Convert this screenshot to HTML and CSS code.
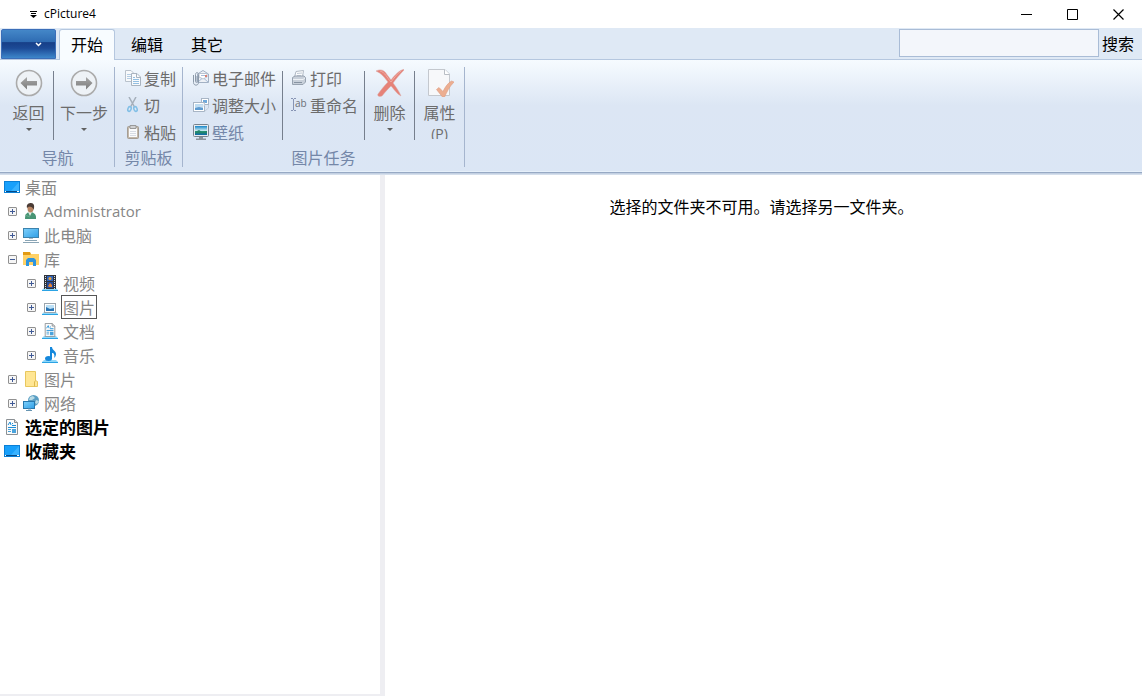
FILE: index.html
```
<!DOCTYPE html>
<html lang="zh-CN">

<head>
    <meta charset="utf-8">
    <title>cPicture4</title>
    <link rel="stylesheet" href="styles.css">
</head>

<body>
    <!-- shared icons -->
    <svg class="defs">
        <linearGradient id="screen" x1="0" y1="0" x2="1" y2="1">
            <stop offset="0" stop-color="#7fd0fb" />
            <stop offset="1" stop-color="#2f9fe6" />
        </linearGradient>
        <linearGradient id="metal" x1="0" y1="0" x2="0" y2="1">
            <stop offset="0" stop-color="#a8a8a8" />
            <stop offset="1" stop-color="#7c7c7c" />
        </linearGradient>
        <linearGradient id="sky" x1="0" y1="0" x2="0" y2="1">
            <stop offset="0" stop-color="#1685c9" />
            <stop offset="0.55" stop-color="#d6f1f4" />
            <stop offset="0.6" stop-color="#2a9a7a" />
            <stop offset="1" stop-color="#0a6a86" />
        </linearGradient>
        <symbol id="desktop" viewBox="0 0 16 16">
            <rect x="0" y="2" width="16" height="12" fill="#0a7fd6" />
            <rect x="1" y="3" width="14" height="9" fill="#18a0fb" />
            <path d="M7 12L15 3V12Z" fill="#38b2ff" />
            <path d="M1 12.5H15" stroke="#064a86" />
            <path d="M1 12.5H2M13 12.5H15" stroke="#fff" />
        </symbol>
        <symbol id="document" viewBox="0 0 16 16">
            <path d="M2.5 .5H10.500L13.500 3.500V15.500H2.500Z" fill="#fafafa" stroke="#8b9094" />
            <path d="M10.500 .5V3.500H13.500" fill="#ddd" stroke="#8b9094" />
            <path d="M4 6L6 3L7 6M8 4.500H9M8 6.500H12M4 8.500H12" fill="none" stroke="#1e8fd8" />
            <path d="M4 10.500H7M4 12.500H7" stroke="#45a0d8" />
            <rect x="8" y="10" width="4" height="4" fill="#4aa3dc" />
        </symbol>
        <symbol id="stand" viewBox="0 0 16 16">
            <path d="M2 13H14L16 15H0Z" fill="#8fd8fa" />
            <path d="M0 15.500H16" stroke="#2ba3e4" />
        </symbol>
    </svg>

    <header class="titlebar">
        <button class="quick" aria-label="自定义快速访问工具栏">
            <svg width="7" height="7" viewBox="0 0 7 7"><path d="M0 .5H7M1 2.500H6" stroke="#000" /><path d="M0 4H7L3.500 7Z" /></svg>
        </button>
        <h1>cPicture4</h1>
        <div class="window-buttons">
            <button aria-label="最小化"><svg width="11" height="11"><path d="M0 5.500H11" stroke="#000" /></svg></button>
            <button aria-label="最大化"><svg width="11" height="11"><path d="M.5 .5H10.500V10.500H.5Z" fill="none" stroke="#000" /></svg></button>
            <button aria-label="关闭"><svg width="11" height="11"><path d="M.5 .5L10.500 10.500M10.500 .5L.5 10.500" stroke="#000" stroke-width="1.200" /></svg></button>
        </div>
    </header>

    <nav class="tabs">
        <button class="app-menu" aria-label="菜单">
            <svg width="7" height="5"><path d="M1 1L3.500 3.500L6 1" fill="none" stroke="#fff" stroke-width="1.500" /></svg>
        </button>
        <button class="tab active">开始</button>
        <button class="tab">编辑</button>
        <button class="tab">其它</button>
        <form class="search">
            <input type="text" id="search">
            <label for="search">搜索</label>
        </form>
    </nav>

    <div class="ribbon">
        <section class="group">
            <div class="tools nav-tools">
                <button class="large">
                    <svg width="28" height="28" viewBox="0 0 28 28">
                        <circle cx="14" cy="14" r="12.500" fill="#eef2f6" stroke="#ababab" stroke-width="1.600" />
                        <path d="M5.500 14L12 8V12H22V16.500H12V20.500Z" fill="url(#metal)" />
                    </svg>
                    <span>返回</span>
                    <i class="arrow"></i>
                </button>
                <div class="divider"></div>
                <button class="large">
                    <svg width="28" height="28" viewBox="0 0 28 28">
                        <circle cx="14" cy="14" r="12.500" fill="#eef2f6" stroke="#ababab" stroke-width="1.600" />
                        <path d="M22.500 14L16 8V12H6V16.500H16V20.500Z" fill="url(#metal)" />
                    </svg>
                    <span>下一步</span>
                    <i class="arrow"></i>
                </button>
            </div>
            <h2>导航</h2>
        </section>

        <section class="group">
            <div class="tools">
                <div class="column">
                    <button class="small">
                        <svg width="16" height="16" viewBox="0 0 16 16">
                            <path d="M.5 .5H6L8.500 3V11.500H.5Z" fill="#f8fafc" stroke="#b9c2cc" />
                            <path d="M2 4.500H6M2 6.500H6M2 8.500H6" stroke="#b3cde4" />
                            <path d="M6.500 3.500H12L15.500 7V15.500H6.500Z" fill="#f8fafc" stroke="#a9b4c0" />
                            <path d="M11.500 3.500V7.500H15.500" fill="none" stroke="#a9b4c0" />
                            <path d="M8 9.500H14M8 11.500H14M8 13.500H14M8 7.500H10" stroke="#93bfe2" />
                        </svg>
                        复制
                    </button>
                    <button class="small">
                        <svg width="16" height="16" viewBox="0 0 16 16">
                            <path d="M4 0L9.500 10M11 0L5.500 10" stroke="#a5afba" stroke-width="1.500" />
                            <ellipse cx="4.500" cy="12" rx="1.600" ry="2.400" fill="none" stroke="#82bfe6" stroke-width="1.500" transform="rotate(20 4.500 12)" />
                            <ellipse cx="10.500" cy="12" rx="1.600" ry="2.400" fill="none" stroke="#82bfe6" stroke-width="1.500" transform="rotate(-20 10.500 12)" />
                        </svg>
                        切
                    </button>
                    <button class="small">
                        <svg width="16" height="16" viewBox="0 0 16 16">
                            <rect x="2.500" y="2.500" width="11" height="12" rx="1" fill="#c3b8aa" stroke="#a59d94" />
                            <path d="M4 4H12V13H4Z" fill="#fafbfd" />
                            <path d="M5 1.500H11V4.500H5Z" fill="#d0d1d3" stroke="#999" />
                            <path d="M5 7.500H11M5 9.500H11M5 11.500H11" stroke="#d7dce4" />
                        </svg>
                        粘贴
                    </button>
                </div>
            </div>
            <h2>剪贴板</h2>
        </section>

        <section class="group">
            <div class="tools">
                <div class="column">
                    <button class="small">
                        <svg width="16" height="16" viewBox="0 0 16 16">
                            <path d="M4.500 4L10 .5L15.500 4V12.500H4.500Z" fill="#eef1f6" stroke="#a3b1c4" />
                            <path d="M6 3.500H14V7L10 9L6 7Z" fill="#fff" stroke="#b9c3d1" />
                            <path d="M5 12L9 8.500M15 12L11 8.500M8 5.500H12" stroke="#a7bcd8" />
                            <rect x="12" y="5" width="2" height="2" fill="#dc8074" />
                            <path d="M.5 5V12.500C.5 16 5.500 16 5.500 12.500V4.500C5.500 2 2.500 2 2.500 4.500V11C2.500 13 4 13 4 11V6" fill="none" stroke="#8c9aaa" />
                        </svg>
                        电子邮件
                    </button>
                    <button class="small">
                        <svg width="16" height="16" viewBox="0 0 16 16">
                            <rect x="8.500" y="1.500" width="7" height="6" fill="#fff" stroke="#a8b5c5" />
                            <rect x="10" y="3" width="4" height="3" fill="#6fa9dc" />
                            <rect x=".5" y="5.500" width="11" height="9" fill="#fff" stroke="#a8b5c5" />
                            <rect x="2" y="7" width="8" height="6" fill="#bfdcf1" />
                            <path d="M2 13V11L6 10L10 11V13Z" fill="#5e9bd0" />
                            <path d="M7 9H11V6" fill="none" stroke="#d8e2ec" />
                            <path d="M11.500 14.500L15.500 11V8" fill="none" stroke="#c1ccd9" />
                        </svg>
                        调整大小
                    </button>
                    <button class="small blue">
                        <svg width="16" height="16" viewBox="0 0 16 16">
                            <rect x=".5" y=".5" width="15" height="12" rx="1" fill="#e8ebef" stroke="#77828e" />
                            <rect x="2" y="2" width="12" height="9" fill="url(#sky)" />
                            <path d="M2 8L6 6L9 8L14 7V11H2Z" fill="#23866c" />
                            <path d="M2 9.500H14V11H2Z" fill="#136fa5" />
                            <path d="M6 13H10V14.500H13V16H3V14.500H6Z" fill="#8b949c" />
                        </svg>
                        壁纸
                    </button>
                </div>
                <div class="divider"></div>
                <div class="column">
                    <button class="small">
                        <svg width="16" height="16" viewBox="0 0 16 16">
                            <path d="M5 1.500L12.500 .5L11.500 7H3.500Z" fill="#fbfcfd" stroke="#b0b9c4" />
                            <path d="M6 3.500L11 3M6 5.500H10" stroke="#bfcad6" />
                            <path d="M1.500 7.500L4 6H13L14.500 7.500V12L12 14.500H1.500Z" fill="#c8d0da" stroke="#97a2b0" />
                            <path d="M2 9.500H12L14 8" fill="none" stroke="#eef2f6" />
                            <path d="M3 12.500H11" stroke="#8793a2" />
                        </svg>
                        打印
                    </button>
                    <button class="small">
                        <svg width="16" height="16" viewBox="0 0 16 16">
                            <path d="M0 1.500H2M3 1.500H5M2.500 2V13M0 13.500H2M3 13.500H5" stroke="#8794b4" />
                            <text x="4" y="10" class="icon-text">ab</text>
                        </svg>
                        重命名
                    </button>
                </div>
                <div class="divider"></div>
                <button class="large">
                    <svg width="28" height="28" viewBox="0 0 28 28">
                        <path d="M0 2C4 0 7 1 9 3L15 11C19 6 23 1 29 0C24 5 20 10 17 14C20 18 23 22 25 27L22 25C19 22 17 19 15 17C12 20 9 23 6 27C3 28 1 27 2 25C5 21 8 17 12 13C9 9 5 4 0 2Z" fill="#e68278" stroke="#d8a6a2" stroke-width=".5" />
                        <path d="M4 2C9 3 11 9 15 13C18 9 21 5 25 2" fill="none" stroke="#efaaa2" />
                    </svg>
                    <span>删除</span>
                    <i class="arrow"></i>
                </button>
                <div class="divider"></div>
                <button class="large">
                    <svg width="28" height="28" viewBox="0 0 28 28">
                        <path d="M2.500 .5H19L23.500 5V26.500H2.500Z" fill="#f7f8fa" stroke="#c4c8ce" />
                        <path d="M18.500 .5V5.500H23.500" fill="#fff" stroke="#b9bec5" />
                        <path d="M10.500 20.500L13 18.500L17 22.500C19 18 22 14 25.500 12L28 13C23 18 21 23 18.500 28H16.500Z" fill="#ecae91" stroke="#dd9a80" stroke-width=".6" />
                    </svg>
                    <span>属性</span>
                    <span class="key">(P)</span>
                </button>
            </div>
            <h2>图片任务</h2>
        </section>
    </div>

    <main>
        <aside>
            <ul class="tree">
                <li>
                    <div class="row"><svg width="16" height="16"><use href="#desktop" /></svg><a href="#">桌面</a></div>
                    <ul>
                        <li>
                            <div class="row">
                                <button class="toggle plus" aria-label="展开"></button>
                                <svg width="16" height="16" viewBox="0 0 16 16">
                                    <path d="M2 16C2 11 4 9 7 9C10 9 13 11 13 14V16Z" fill="#489474" />
                                    <path d="M5 9L7 13L9 9Z" fill="#e6eee8" />
                                    <ellipse cx="7.500" cy="5.500" rx="3" ry="4" fill="#b98563" />
                                    <path d="M4 5C3 1 6 0 8 0C11 0 12 3 10.500 7C10 4 8 4 6 3.500Z" fill="#4a3b35" />
                                    <path d="M2 12L7 14" stroke="#69ad8e" />
                                </svg>
                                <a href="#" class="user">Administrator</a>
                            </div>
                        </li>
                        <li>
                            <div class="row">
                                <button class="toggle plus" aria-label="展开"></button>
                                <svg width="16" height="16" viewBox="0 0 16 16">
                                    <rect x=".5" y="1.500" width="15" height="9" fill="url(#screen)" stroke="#3c83ad" />
                                    <path d="M6 11H10V12H6Z" fill="#a9bcc8" />
                                    <path d="M2 13.500H14M0 15.500H16" stroke="#8aa5b5" />
                                </svg>
                                <a href="#">此电脑</a>
                            </div>
                        </li>
                        <li>
                            <div class="row">
                                <button class="toggle" aria-label="折叠"></button>
                                <svg width="16" height="16" viewBox="0 0 16 16">
                                    <path d="M0 1H7L8 3H16V14H0Z" fill="#e39b14" />
                                    <path d="M0 4H7L8 3H16V14H0Z" fill="#ffd166" />
                                    <path d="M3 15V9L5 7H11L13 9V15H10V11H6V15Z" fill="#2f94dd" />
                                </svg>
                                <a href="#">库</a>
                            </div>
                            <ul>
                                <li>
                                    <div class="row">
                                        <button class="toggle plus" aria-label="展开"></button>
                                        <svg width="16" height="16" viewBox="0 0 16 16">
                                            <use href="#stand" />
                                            <rect x="2" y="0" width="12" height="14" fill="#30343c" />
                                            <path d="M3.500 1V14M12.500 1V14" stroke="#d9dde0" stroke-dasharray="1 1" />
                                            <rect x="5" y="1" width="6" height="5" fill="#2e63bd" />
                                            <rect x="5" y="7" width="6" height="6" fill="#264c9b" />
                                            <circle cx="8" cy="3.500" r="1.500" fill="#e9a43a" />
                                            <path d="M6 11L8 8L10 10V12H7Z" fill="#e58334" />
                                        </svg>
                                        <a href="#">视频</a>
                                    </div>
                                </li>
                                <li>
                                    <div class="row">
                                        <button class="toggle plus" aria-label="展开"></button>
                                        <svg width="16" height="16" viewBox="0 0 16 16">
                                            <use href="#stand" />
                                            <rect x="2.500" y="4.500" width="11" height="9" fill="#fff" stroke="#9ba5ad" />
                                            <rect x="4" y="6" width="8" height="6" fill="#bce0f6" />
                                            <path d="M4 8L8 10L12 9V12H4Z" fill="#2875b5" />
                                        </svg>
                                        <a href="#" class="selected">图片</a>
                                    </div>
                                </li>
                                <li>
                                    <div class="row">
                                        <button class="toggle plus" aria-label="展开"></button>
                                        <svg width="16" height="16" viewBox="0 0 16 16">
                                            <use href="#stand" />
                                            <use href="#document" x="1" y="0" width="14" height="14" />
                                        </svg>
                                        <a href="#">文档</a>
                                    </div>
                                </li>
                                <li>
                                    <div class="row">
                                        <button class="toggle plus" aria-label="展开"></button>
                                        <svg width="16" height="16" viewBox="0 0 16 16">
                                            <use href="#stand" />
                                            <ellipse cx="6.500" cy="11.500" rx="3.500" ry="2.500" fill="#1588dc" />
                                            <path d="M8 0H10C10 3 14 4 14 7C14 9 13 10 12 11C13 8 12 6 10 6V12H8Z" fill="#1588dc" />
                                        </svg>
                                        <a href="#">音乐</a>
                                    </div>
                                </li>
                            </ul>
                        </li>
                        <li>
                            <div class="row">
                                <button class="toggle plus" aria-label="展开"></button>
                                <svg width="16" height="16" viewBox="0 0 16 16">
                                    <path d="M2.500 .5H12.500V9.500L14.500 10.500V15.500H2.500Z" fill="#ffe694" stroke="#e8c75e" />
                                    <path d="M12.500 9.500L11.500 11V15.500" fill="none" stroke="#dfba4e" />
                                </svg>
                                <a href="#">图片</a>
                            </div>
                        </li>
                        <li>
                            <div class="row">
                                <button class="toggle plus" aria-label="展开"></button>
                                <svg width="16" height="16" viewBox="0 0 16 16">
                                    <circle cx="10.500" cy="5.500" r="5.500" fill="#5b9fc4" />
                                    <path d="M7 2L10 1L12 3L9 5L6 5ZM13 5L16 6L14 9L12 8Z" fill="#b9dbe6" />
                                    <rect x=".5" y="6.500" width="11" height="7" fill="url(#screen)" stroke="#2878ad" />
                                    <path d="M5 14H8M3 15.500H9" stroke="#6795b2" />
                                </svg>
                                <a href="#">网络</a>
                            </div>
                        </li>
                    </ul>
                </li>
                <li>
                    <div class="row strong"><svg width="16" height="16"><use href="#document" /></svg><a href="#">选定的图片</a></div>
                </li>
                <li>
                    <div class="row strong"><svg width="16" height="16"><use href="#desktop" /></svg><a href="#">收藏夹</a></div>
                </li>
            </ul>
        </aside>
        <p class="message">选择的文件夹不可用。请选择另一文件夹。</p>
    </main>
</body>

</html>
```
FILE: styles.css
```
* {
    box-sizing: border-box;
}

body {
    display: flex;
    flex-direction: column;
    height: 100vh;
    margin: 0;
    overflow: hidden;
    background: #fff;
    color: #000;
    font: 16px/24px "Noto Sans CJK SC", sans-serif;
}

button {
    padding: 0;
    border: none;
    background: none;
    color: inherit;
    font: inherit;
}

svg {
    display: block;
    flex: none;
}

.defs {
    position: absolute;
    width: 0;
    height: 0;
}

/* title bar */
.titlebar {
    display: flex;
    align-items: center;
    height: 28px;
    padding: 0 1px 0 30px;
}

.titlebar h1 {
    flex: 1;
    margin: 0 0 0 7px;
    font: 12px/28px "Open Sans", sans-serif;
}

.window-buttons {
    display: flex;
}

.window-buttons button {
    display: flex;
    align-items: center;
    justify-content: center;
    width: 46px;
    height: 26px;
}

/* tabs */
.tabs {
    display: flex;
    height: 32px;
    padding: 1px 8px 0 1px;
    border-bottom: 1px solid #b5c7df;
    background: #dfe9f5;
}

.app-menu {
    display: flex;
    align-items: center;
    justify-content: flex-end;
    width: 55px;
    height: 30px;
    margin-right: 3px;
    padding-right: 13px;
    border: 1px solid #3b6eb8;
    border-radius: 2px 2px 0 0;
    background: linear-gradient(#4487c8, #2f6cb3 42%, #173f88 45%, #1c4a96 65%, #3d87cb);
}

.tab {
    width: 56px;
    height: 31px;
    margin-right: 4px;
    padding-bottom: 2px;
}

.tab.active {
    border: 1px solid #b5c7df;
    border-bottom: none;
    border-radius: 3px 3px 0 0;
    background: #f8fcff;
}

.search {
    display: flex;
    margin-left: auto;
    gap: 3px;
    line-height: 28px;
}

.search input {
    width: 200px;
    height: 28px;
    padding: 0 4px;
    border: 1px solid #a9bcd6;
    background: #f3f6fb;
    font: inherit;
}

/* ribbon */
.ribbon {
    display: flex;
    height: 115px;
    padding: 4px 0 0 1px;
    border-bottom: 1px solid #d5dfec;
    background: linear-gradient(#f6fbff, #dce6f4 40%, #dbe6f5);
    box-shadow: inset 0 -1px #c3d0e2, inset 0 -2px #97a9c4, inset 0 -3px #e6f0fa;
}

.group {
    display: flex;
    flex-direction: column;
    height: 103px;
    padding-right: 1px;
    background: linear-gradient(#a5b5ce, #a5b5ce) right bottom / 1px 100px no-repeat;
    color: #6c6c6c;
}

.group h2 {
    margin: 0;
    color: #7487a8;
    font-size: 16px;
    font-weight: normal;
    line-height: 22px;
    text-align: center;
}

.tools {
    display: flex;
    flex: none;
    height: 82px;
}

.nav-tools {
    padding-left: 3px;
}

.column {
    padding: 0 6px 0 10px;
}

.divider + .column {
    padding-left: 8px;
}

.small {
    display: flex;
    align-items: center;
    gap: 3px;
    height: 27px;
}

.small.blue {
    color: #7487a8;
}

.large {
    display: flex;
    flex-direction: column;
    align-items: center;
    min-width: 49px;
    height: 75px;
    padding: 5px 6px 0;
    overflow: hidden;
}

.large svg {
    margin-bottom: 3px;
}

.arrow {
    flex: none;
    margin-top: 4px;
    border: 3px solid transparent;
    border-top-color: #606060;
    border-bottom: none;
}

.key {
    font: 14px/20px "Open Sans", sans-serif;
}

.divider {
    width: 1px;
    height: 69px;
    margin-top: 7px;
    background: #767f8d;
}

.icon-text {
    fill: #6c7077;
    font: 10px "Open Sans", sans-serif;
}

/* content */
main {
    display: flex;
    flex: 1;
    min-height: 0;
    padding-bottom: 1px;
}

aside {
    width: 385px;
    padding-left: 4px;
    border-right: 5px solid #eeeef2;
    border-bottom: 2px solid #eeeef2;
    overflow: auto;
}

.tree,
.tree ul {
    margin: 0;
    padding: 0;
    list-style: none;
}

.tree ul {
    padding-left: 3px;
}

.tree ul ul {
    padding-left: 19px;
}

.row {
    display: flex;
    align-items: center;
    height: 24px;
    color: #868686;
}

.row a {
    margin-left: 3px;
    padding: 0 1px;
    border: 1px solid transparent;
    color: inherit;
    line-height: 22px;
    text-decoration: none;
}

.row a.user {
    font-family: "Open Sans", sans-serif;
    font-size: 15px;
}

.row a.selected {
    border-color: #555;
}

.row.strong {
    color: #000;
    font-size: 17px;
    font-weight: bold;
}

.toggle {
    width: 9px;
    height: 9px;
    margin: 0 6px 0 1px;
    border: 1px solid #919191;
    border-radius: 1px;
    background: linear-gradient(#405a96, #405a96) center / 5px 1px no-repeat #f6f6f6;
}

.toggle.plus {
    background: linear-gradient(#405a96, #405a96) center / 5px 1px no-repeat, linear-gradient(#405a96, #405a96) center / 1px 5px no-repeat #f6f6f6;
}

.message {
    flex: 1;
    margin: 0;
    padding: 19px 4px 0 0;
    text-align: center;
}
```
